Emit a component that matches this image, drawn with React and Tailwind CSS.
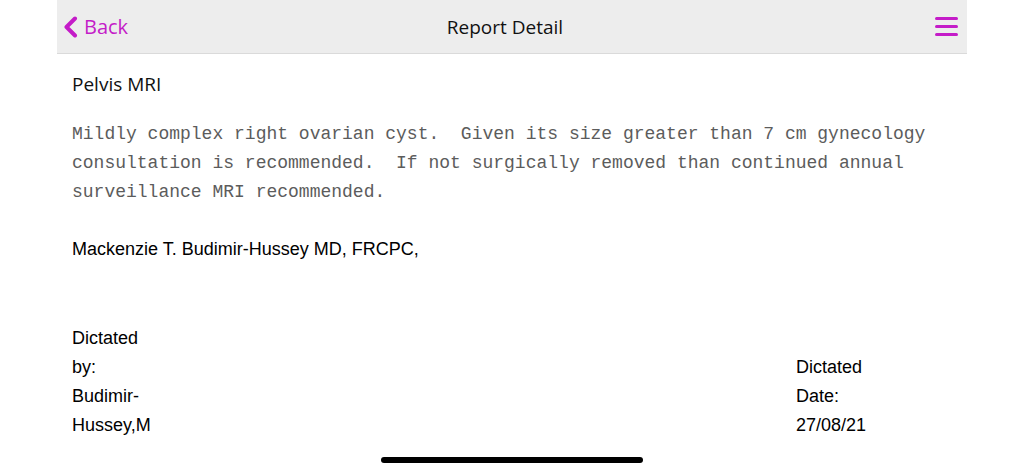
import React from "react";

export default function App() {
  return (
    <div className="relative w-[1024px] h-[473px] bg-white overflow-hidden">
      <div className="mx-[57px] w-[910px]">
        <header className="flex items-center h-[54px] bg-[#ededed] border-b border-[#dadada]">
          <div className="w-[80px] flex items-center pl-[6px] gap-[6px] text-[#c41cc8]">
            <svg width="15" height="22" viewBox="0 0 15 22" className="shrink-0">
              <path d="M12 2.5 L3.5 11 L12 19.5" fill="none" stroke="#c41cc8" strokeWidth="4" strokeLinecap="round" strokeLinejoin="round" />
            </svg>
            <span className="text-[20px] leading-none font-['Open_Sans',sans-serif]">Back</span>
          </div>
          <div className="flex-1 text-center text-[19px] text-[#111] font-['Open_Sans',sans-serif] pt-[2px]">
            Report Detail
          </div>
          <div className="w-[94px] flex justify-end pr-[9px]">
            <div className="flex flex-col gap-[5px] w-[23px]">
              <span className="block h-[3px] rounded-full bg-[#c41cc8]" />
              <span className="block h-[3px] rounded-full bg-[#c41cc8]" />
              <span className="block h-[3px] rounded-full bg-[#c41cc8]" />
            </div>
          </div>
        </header>
        <main className="px-[15px]">
          <h1 className="mt-[17px] text-[19px] leading-[26px] text-[#111] font-['Open_Sans',sans-serif]">Pelvis MRI</h1>
          <p className="mt-[23px] whitespace-pre-wrap text-[18px] leading-[29px] text-[#5c5c5c] font-['Liberation_Mono',monospace]">
            {"Mildly complex right ovarian cyst.  Given its size greater than 7 cm gynecology\nconsultation is recommended.  If not surgically removed than continued annual\nsurveillance MRI recommended."}
          </p>
          <p className="mt-[28px] text-[18px] leading-[29px] text-black font-['Liberation_Sans',sans-serif]">
            Mackenzie T. Budimir-Hussey MD, FRCPC,
          </p>
          <div className="mt-[60px] flex justify-between items-end text-[18px] leading-[29px] text-black font-['Liberation_Sans',sans-serif]">
            <div className="w-[80px]">Dictated by: Budimir-Hussey,M</div>
            <div className="w-[156px]">
              <div className="w-[80px]">Dictated Date: 27/08/21</div>
            </div>
          </div>
        </main>
      </div>
      <div className="absolute left-[381px] top-[457px] w-[262px] h-[6px] rounded-full bg-black" />
    </div>
  );
}
